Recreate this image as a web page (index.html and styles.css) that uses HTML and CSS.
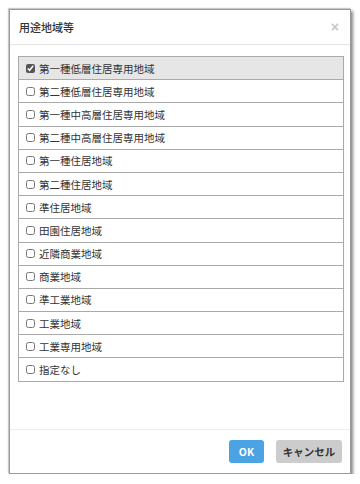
FILE: index.html
```html
<!DOCTYPE html>
<html lang="ja">
<head>
    <meta charset="UTF-8">
    <title>用途地域等</title>
    <link rel="stylesheet" href="styles.css">
</head>
<body>
    <div class="dialog">
        <div class="dialog-header">
            <span class="dialog-title">用途地域等</span>
            <span class="dialog-close">&times;</span>
        </div>
        <div class="dialog-body">
            <ul class="zone-list">
                <li class="selected"><input type="checkbox" checked> 第一種低層住居専用地域</li>
                <li><input type="checkbox"> 第二種低層住居専用地域</li>
                <li><input type="checkbox"> 第一種中高層住居専用地域</li>
                <li><input type="checkbox"> 第二種中高層住居専用地域</li>
                <li><input type="checkbox"> 第一種住居地域</li>
                <li><input type="checkbox"> 第二種住居地域</li>
                <li><input type="checkbox"> 準住居地域</li>
                <li><input type="checkbox"> 田園住居地域</li>
                <li><input type="checkbox"> 近隣商業地域</li>
                <li><input type="checkbox"> 商業地域</li>
                <li><input type="checkbox"> 準工業地域</li>
                <li><input type="checkbox"> 工業地域</li>
                <li><input type="checkbox"> 工業専用地域</li>
                <li><input type="checkbox"> 指定なし</li>
            </ul>
        </div>
        <div class="dialog-footer">
            <button class="btn btn-ok">OK</button>
            <button class="btn btn-cancel">キャンセル</button>
        </div>
    </div>
</body>
</html>
```

FILE: styles.css
```css
html, body {
    margin: 0;
    background: #fff;
    font-family: "Noto Sans CJK JP", "Liberation Sans", sans-serif;
    color: #333;
}

.dialog {
    margin: 9px 0 0 9px;
    width: 340px;
    height: 463px;
    border: 1px solid #999;
    box-shadow: 2px 2px 3px #888, -1px -1px 1px #ccc;
    background: #fff;
    display: flex;
    flex-direction: column;
}

.dialog-header {
    height: 34px;
    padding: 0 11px 0 9px;
    border-bottom: 1px solid #e5e5e5;
    display: flex;
    align-items: center;
    justify-content: space-between;
}

.dialog-title {
    font-size: 11px;
    font-weight: 500;
    color: #333;
}

.dialog-close {
    font-size: 14px;
    color: #c8c8c8;
    font-family: "Liberation Sans", sans-serif;
    font-weight: bold;
}

.dialog-body {
    height: 373px;
    padding: 11px 6px 0 8px;
    border-bottom: 1px solid #eee;
}

.zone-list {
    list-style: none;
    margin: 0;
    padding: 0;
    border: 1px solid #aaa;
    border-bottom: none;
}

.zone-list li {
    height: 22.2px;
    border-bottom: 1px solid #aaa;
    display: flex;
    align-items: center;
    padding-left: 6px;
    font-size: 10.5px;
    color: #333;
}

.zone-list li.selected {
    background-color: #e6e6e6;
}

.zone-list input {
    width: 9px;
    height: 9px;
    margin: 0 4px 0 1px;
    accent-color: #555;
}

.dialog-footer {
    flex-grow: 1;
    display: flex;
    align-items: center;
    justify-content: flex-end;
    padding-right: 8px;
    gap: 12px;
}

.btn {
    height: 23px;
    border: none;
    border-radius: 3px;
    font-family: "Noto Sans CJK JP", "Liberation Sans", sans-serif;
    font-size: 10.5px;
    font-weight: bold;
    cursor: pointer;
}

.btn-ok {
    width: 35px;
    background-color: #4ca3e4;
    color: #fff;
}

.btn-cancel {
    width: 66px;
    background-color: #ccc;
    color: #333;
}
```
